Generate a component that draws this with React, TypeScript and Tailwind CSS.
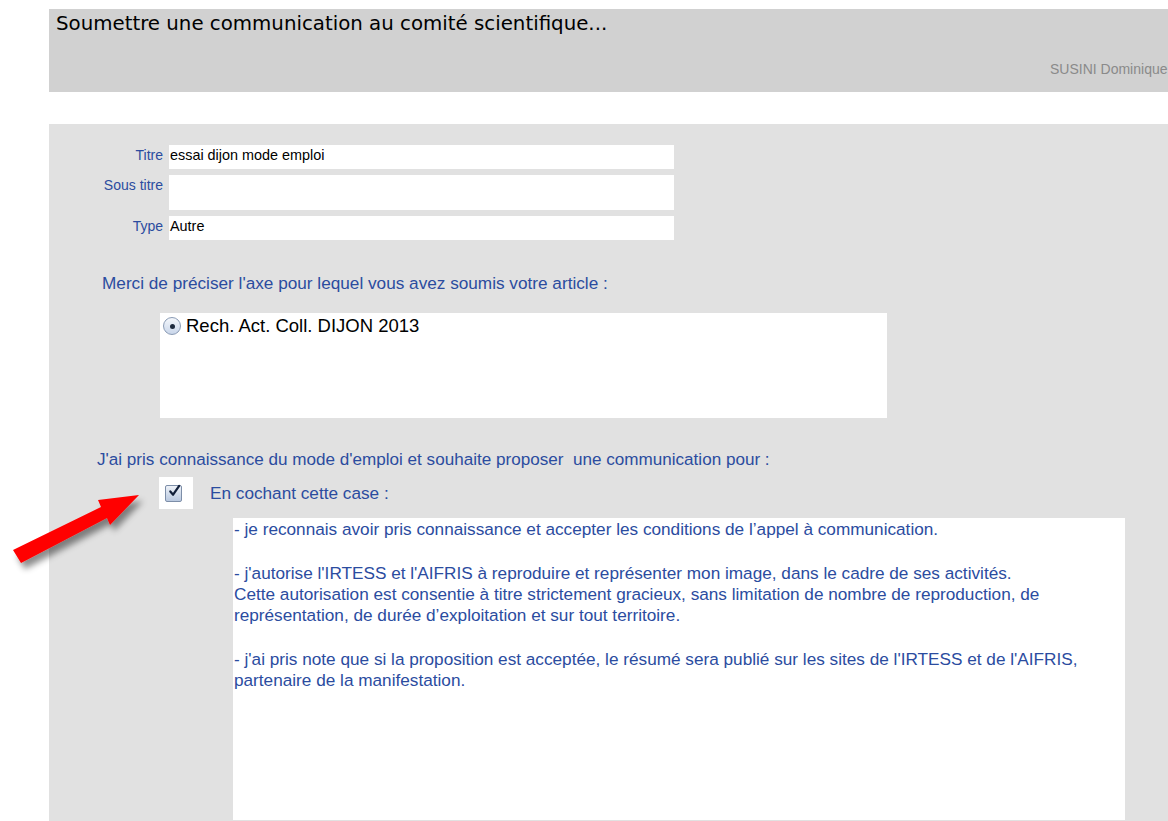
import React, { useState } from 'react';

const blue = 'text-[#2b4c9f]';

function FieldRow({ label, value, tall }: { label: string; value: string; tall?: boolean }) {
  return (
    <div className="flex items-start">
      <label className={`w-[114px] shrink-0 pt-[1px] text-right text-[14px] leading-[18px] ${blue}`}>
        {label}
      </label>
      <div className={`ml-[6px] w-[505px] bg-white px-[1px] pt-[1px] text-[14.4px] leading-[18px] text-black ${tall ? 'h-[35px]' : 'h-[24px]'}`}>
        {value}
      </div>
    </div>
  );
}

function RedArrow() {
  return (
    <svg
      className="absolute left-0 top-[486px] pointer-events-none"
      width="160"
      height="100"
      viewBox="0 486 160 100"
    >
      <defs>
        <filter id="arrowShadow" x="-20%" y="-20%" width="150%" height="160%">
          <feDropShadow dx="4" dy="6" stdDeviation="3" floodColor="#000" floodOpacity="0.45" />
        </filter>
      </defs>
      <polygon
        points="13,550 101,507 98,500 139,495 110,525 107,518 21,563"
        fill="#ff0000"
        filter="url(#arrowShadow)"
      />
    </svg>
  );
}

export default function App() {
  const [accepted, setAccepted] = useState(true);

  return (
    <div className="relative min-h-[821px] overflow-hidden bg-white font-['Liberation_Sans',Arial,sans-serif]">
      <header className="relative ml-[49px] mt-[9px] h-[83px] bg-[#d1d1d1]">
        <h1 className="pl-[7px] pt-[2px] font-['DejaVu_Sans',Verdana,sans-serif] text-[19.8px] leading-[26px] text-black">
          Soumettre une communication au comité scientifique...
        </h1>
        <span className="absolute left-[1001px] top-[50px] whitespace-nowrap text-[14px] text-[#8a8a8a]">
          SUSINI Dominique
        </span>
      </header>

      <main className="ml-[49px] mt-[32px] min-h-[697px] bg-[#e1e1e1] pt-[21px]">
        <div className="flex flex-col gap-[6px]">
          <FieldRow label="Titre" value="essai dijon mode emploi" />
          <FieldRow label="Sous titre" value="" tall />
          <FieldRow label="Type" value="Autre" />
        </div>

        <p className={`ml-[53px] mt-[33px] text-[17.2px] leading-[21px] ${blue}`}>
          Merci de préciser l'axe pour lequel vous avez soumis votre article :
        </p>

        <div className="ml-[111px] mt-[19px] h-[105px] w-[727px] bg-white pl-[3px] pt-[3px]">
          <label className="flex items-center gap-[5px] text-[18.5px] leading-[20px] text-black">
            <span className="flex h-[18px] w-[18px] items-center justify-center rounded-full border border-[#8a9bb5] bg-gradient-to-b from-[#f4f7fb] to-[#c9d6ea]">
              <span className="h-[5px] w-[5px] rounded-full bg-[#1d2a3d]" />
            </span>
            Rech. Act. Coll. DIJON 2013
          </label>
        </div>

        <p className={`ml-[48px] mt-[31px] whitespace-pre text-[17.1px] leading-[21px] ${blue}`}>
          J'ai pris connaissance du mode d'emploi et souhaite proposer  une communication pour :
        </p>

        <div className="mt-[7px] flex items-center">
          <button
            type="button"
            onClick={() => setAccepted(!accepted)}
            className="ml-[110px] flex h-[32px] w-[34px] items-center bg-white pl-[6px]"
          >
            <span className="flex h-[17px] w-[17px] items-center justify-center rounded-[2px] border border-[#7d8ea8] bg-gradient-to-b from-[#eef2f8] to-[#b9c8df]">
              {accepted && (
                <svg width="16" height="16" viewBox="0 0 14 14" className="-mt-[4px] ml-[2px]">
                  <path d="M2.5 7.5 L5.5 11 L12 1.5" fill="none" stroke="#12203a" strokeWidth="2.4" strokeLinecap="round" strokeLinejoin="round" />
                </svg>
              )}
            </span>
          </button>
          <span className={`ml-[17px] text-[17.2px] leading-[21px] ${blue}`}>En cochant cette case :</span>
        </div>

        <div className={`ml-[184px] mt-[9px] min-h-[302px] w-[892px] bg-white pl-[1px] pt-[1px] text-[17.2px] leading-[21px] ${blue}`}>
          <p>- je reconnais avoir pris connaissance et accepter les conditions de l’appel à communication.</p>
          <p className="mt-[23px]">
            - j'autorise l'IRTESS et l'AIFRIS à reproduire et représenter mon image, dans le cadre de ses activités.
            <br />
            Cette autorisation est consentie à titre strictement gracieux, sans limitation de nombre de reproduction, de
            <br />
            représentation, de durée d’exploitation et sur tout territoire.
          </p>
          <p className="mt-[23px]">
            - j'ai pris note que si la proposition est acceptée, le résumé sera publié sur les sites de l'IRTESS et de l'AIFRIS,
            <br />
            partenaire de la manifestation.
          </p>
        </div>
      </main>

      <RedArrow />
    </div>
  );
}
